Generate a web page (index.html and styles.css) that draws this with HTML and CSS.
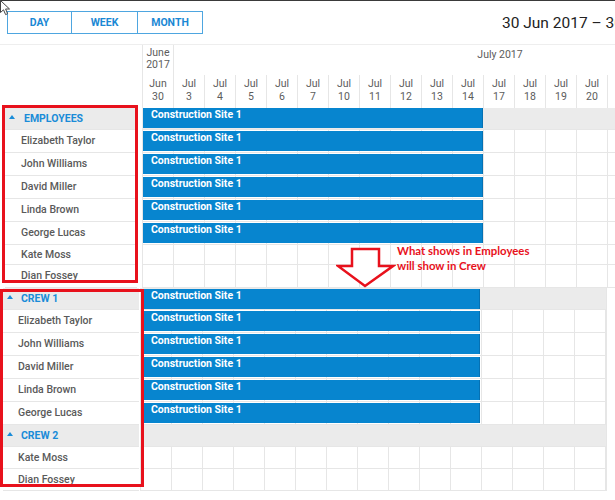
FILE: index.html
```html
<!DOCTYPE html>
<html>
<head>
<meta charset="utf-8">
<title>Scheduler</title>
<link rel="stylesheet" href="styles.css">
</head>
<body>
<div class="page">
  <div class="topline"></div>
  <svg class="cursor" width="12" height="16" viewBox="0 0 12 16"><path d="M0.5 0.5 L0.5 12.5 L3.5 9.8 L5.6 14.6 L7.6 13.7 L5.6 9 L9.5 9 Z" fill="#fff" stroke="#444" stroke-width="1"/></svg>

  <div class="toolbar">
    <div class="views">
      <button class="view view-day">DAY</button>
      <button class="view view-week">WEEK</button>
      <button class="view view-month">MONTH</button>
    </div>
    <div class="range">30 Jun 2017 – 30 Jul 2017</div>
  </div>

  <div class="sched top">
    <div class="head">
      <div class="head-row months">
        <div class="corner"></div>
        <div class="month june">June<br>2017</div>
        <div class="month july">July 2017</div>
      </div>
      <div class="head-row days">
        <div class="corner"></div>
        <div class="day">Jun<br>30</div>
        <div class="day">Jul<br>3</div>
        <div class="day">Jul<br>4</div>
        <div class="day">Jul<br>5</div>
        <div class="day">Jul<br>6</div>
        <div class="day">Jul<br>7</div>
        <div class="day">Jul<br>10</div>
        <div class="day">Jul<br>11</div>
        <div class="day">Jul<br>12</div>
        <div class="day">Jul<br>13</div>
        <div class="day">Jul<br>14</div>
        <div class="day">Jul<br>17</div>
        <div class="day">Jul<br>18</div>
        <div class="day">Jul<br>19</div>
        <div class="day">Jul<br>20</div>
        <div class="day"></div>
      </div>
    </div>

    <div class="row group">
      <div class="res"><span class="tri"></span>EMPLOYEES</div>
      <div class="track"><div class="event">Construction Site 1</div></div>
    </div>
    <div class="row">
      <div class="res">Elizabeth Taylor</div>
      <div class="track"><div class="event">Construction Site 1</div></div>
    </div>
    <div class="row">
      <div class="res">John Williams</div>
      <div class="track"><div class="event">Construction Site 1</div></div>
    </div>
    <div class="row">
      <div class="res">David Miller</div>
      <div class="track"><div class="event">Construction Site 1</div></div>
    </div>
    <div class="row">
      <div class="res">Linda Brown</div>
      <div class="track"><div class="event">Construction Site 1</div></div>
    </div>
    <div class="row">
      <div class="res">George Lucas</div>
      <div class="track"><div class="event">Construction Site 1</div></div>
    </div>
    <div class="row short">
      <div class="res">Kate Moss</div>
      <div class="track"></div>
    </div>
    <div class="row">
      <div class="res">Dian Fossey</div>
      <div class="track"></div>
    </div>
  </div>

  <div class="sched bottom">
    <div class="row group">
      <div class="res"><span class="tri"></span>CREW 1</div>
      <div class="track"><div class="event">Construction Site 1</div></div>
    </div>
    <div class="row">
      <div class="res">Elizabeth Taylor</div>
      <div class="track"><div class="event">Construction Site 1</div></div>
    </div>
    <div class="row">
      <div class="res">John Williams</div>
      <div class="track"><div class="event">Construction Site 1</div></div>
    </div>
    <div class="row">
      <div class="res">David Miller</div>
      <div class="track"><div class="event">Construction Site 1</div></div>
    </div>
    <div class="row">
      <div class="res">Linda Brown</div>
      <div class="track"><div class="event">Construction Site 1</div></div>
    </div>
    <div class="row">
      <div class="res">George Lucas</div>
      <div class="track"><div class="event">Construction Site 1</div></div>
    </div>
    <div class="row group">
      <div class="res"><span class="tri"></span>CREW 2</div>
      <div class="track"></div>
    </div>
    <div class="row mid">
      <div class="res">Kate Moss</div>
      <div class="track"></div>
    </div>
    <div class="row mid">
      <div class="res">Dian Fossey</div>
      <div class="track"></div>
    </div>
  </div>

  <div class="mark mark-employees"></div>
  <div class="mark mark-crew"></div>
  <svg class="arrow" width="60" height="44" viewBox="0 0 60 44"><polygon points="16,3 43,3 43,20 57,20 29,40 2,20 16,20" fill="#fff" stroke="#e8111c" stroke-width="2.5" stroke-linejoin="miter"/></svg>
  <div class="note">What shows in Employees<br>will show in Crew</div>
</div>
</body>
</html>
```

FILE: styles.css
```css
* { box-sizing: border-box; }
html, body { margin: 0; background: #fff; }
body { font-family: Roboto, "Liberation Sans", sans-serif; overflow: hidden; }

.page { position: relative; width: 615px; height: 500px; overflow: hidden; }

.topline { height: 1px; background: #3a3a3a; }

.cursor { position: absolute; left: 0; top: 0; }

.toolbar { display: flex; align-items: center; padding: 10px 0 10px 7px; }
.views { display: flex; flex: none; height: 23px; border: 1px solid #4ea6e0; }
.view {
  font: 700 10.5px Roboto, "Liberation Sans", sans-serif;
  color: #1b88d4; background: #fff; border: 0; padding: 0; margin: 0;
  height: 21px; cursor: pointer;
}
.view-day { width: 63px; }
.view-week { width: 66px; border-left: 1px solid #4ea6e0; }
.view-month { width: 65px; border-left: 1px solid #4ea6e0; }
.range { flex: none; margin-left: 299px; font-size: 15.5px; color: #222; white-space: nowrap; }

.head-row { display: flex; }
.corner { flex: none; width: 142px; }
.months { height: 31px; border-top: 1px solid #eeeeee; }
.month { flex: none; font-size: 10.5px; line-height: 12px; color: #5c5c5c; text-align: center; }
.june { width: 32px; padding-top: 2px; border-left: 1px solid #e6e6e6; border-right: 1px solid #e6e6e6; }
.july { width: 652px; padding-top: 4px; }
.days { height: 33px; }
.day {
  flex: none; width: 31px; border-left: 1px solid #e6e6e6;
  text-align: center; font-size: 10.5px; line-height: 12.5px; padding-top: 3px; color: #5c5c5c;
}

.row { display: flex; height: 23px; }
.row.group { height: 22px; }
.row.short { height: 20px; }
.row.mid { height: 22px; }

.res {
  flex: none; display: flex; align-items: center;
  border-bottom: 1px solid #e6e6e6;
  font-size: 10.5px; font-weight: 500; color: #5a5a5a; white-space: nowrap;
  padding-bottom: 1px;
}
.track {
  flex: none; border-bottom: 1px solid #e6e6e6;
  background: repeating-linear-gradient(to right, #e6e6e6 0 1px, transparent 1px 31px);
}
.group .res { background: #ebebeb; color: #1a8cd8; font-weight: 700; }
.group .track { background: #ebebeb; }
.tri {
  width: 0; height: 0; border-left: 3px solid transparent; border-right: 3px solid transparent;
  border-bottom: 4px solid #1a8cd8; margin-bottom: 2px;
}

.event {
  height: 20px; margin-top: 1px; padding: 1px 0 0 8px;
  background: #0785cf; border-right: 1px solid #0571b3;
  color: #fff; font-size: 10.5px; font-weight: 700; line-height: 12px; white-space: nowrap;
}

.top .res { width: 132px; margin: 0 5px; padding-left: 16px; }
.top .group .res { padding-left: 4px; }
.top .tri { margin-right: 9px; }
.top .track { width: 473px; }
.top .event { width: 340px; margin-left: 1px; }
.top .group .event { margin-top: 0; }

.bottom .res { width: 136px; margin: 0 1px 0 3px; padding-left: 15px; }
.bottom .group .res { padding-left: 4px; }
.bottom .tri { margin-right: 8px; }
.bottom .track { width: 467px; border-right: 1px solid #e6e6e6; }
.bottom .event { width: 337px; margin-left: 3px; }

.mark { position: absolute; border: 3px solid #e8111c; }
.mark-employees { left: 2px; top: 105px; width: 136px; height: 178px; }
.mark-crew { left: 0; top: 289px; width: 144px; height: 198px; }

.arrow { position: absolute; left: 336px; top: 246px; }
.note {
  position: absolute; left: 397px; top: 243px;
  font-family: Lato, "Open Sans", sans-serif; font-weight: 700; font-size: 11.4px; line-height: 15px;
  color: #e8111c;
}
```
